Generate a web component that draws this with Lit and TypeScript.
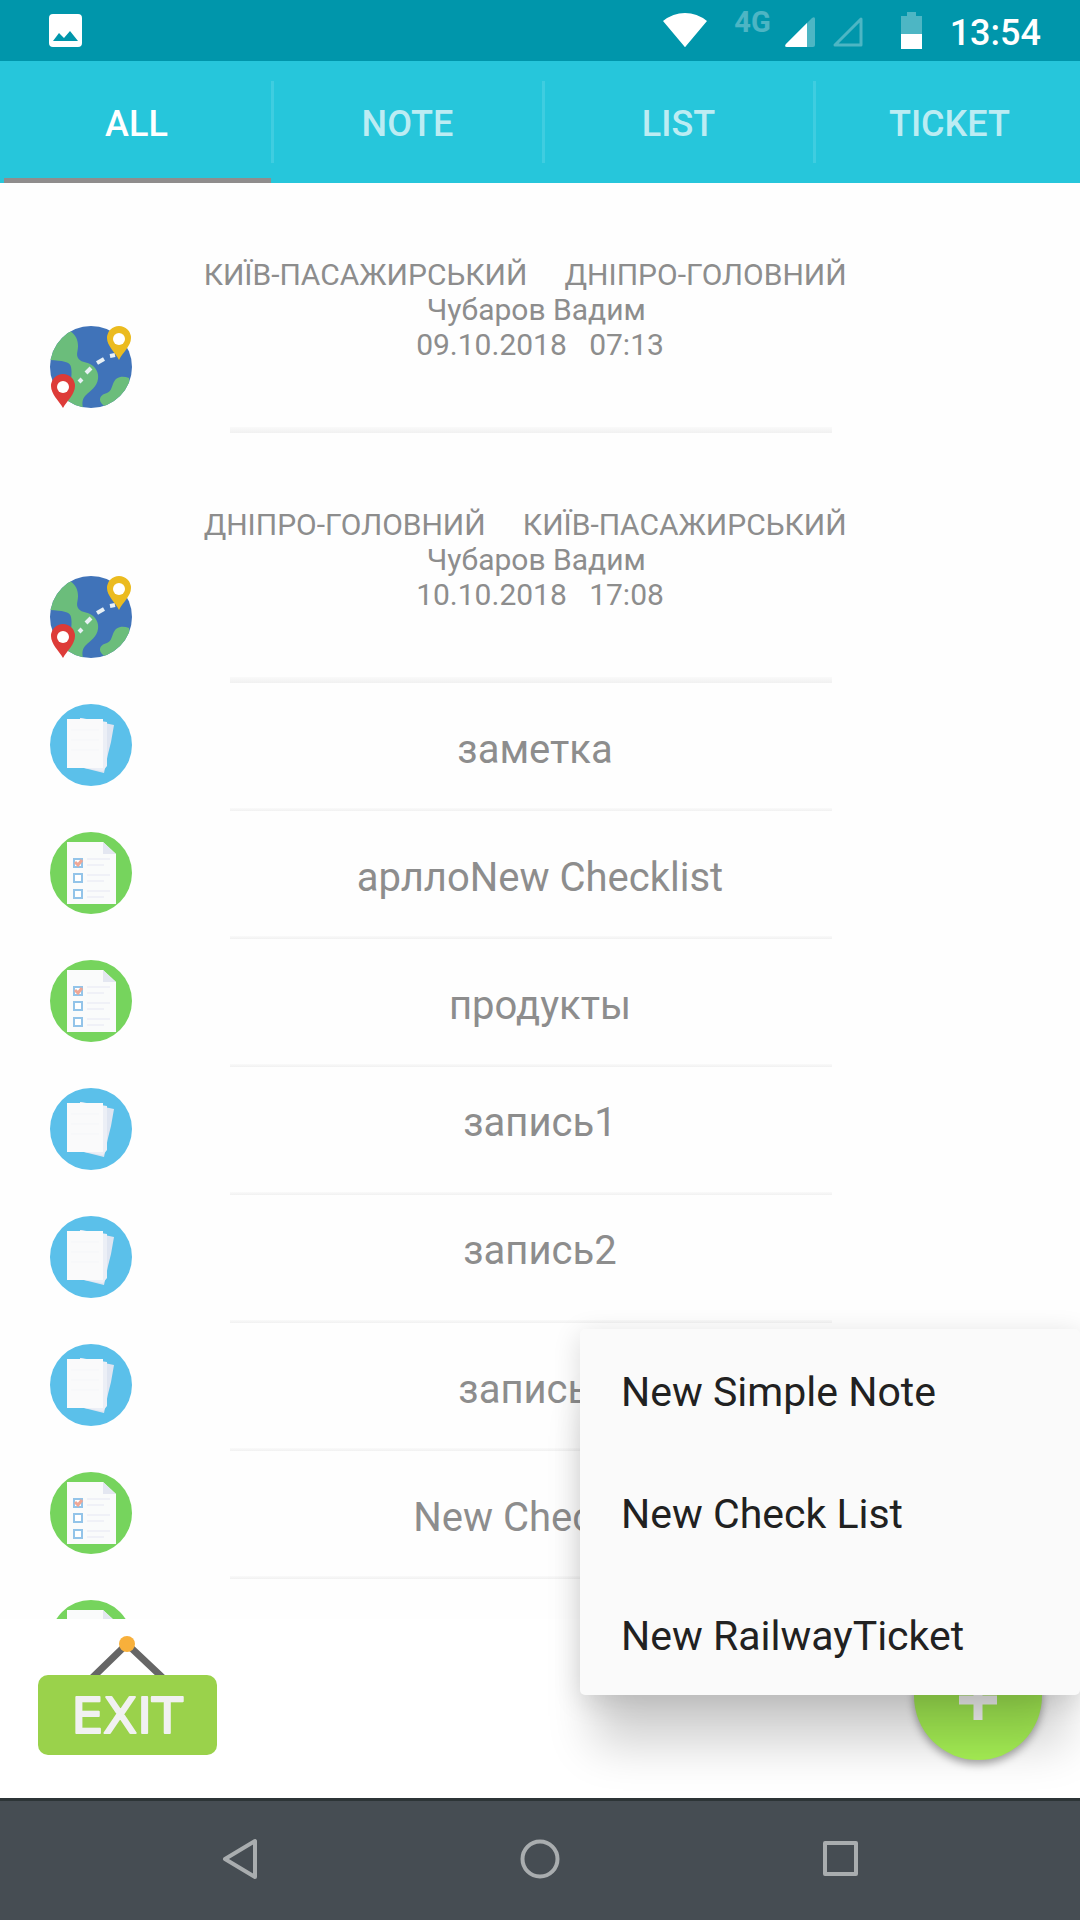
import { LitElement, html, svg, css, nothing } from "lit";
import { customElement, property, state } from "lit/decorators.js";
import { classMap } from "lit/directives/class-map.js";

type Kind = "ticket" | "note" | "checklist";

interface Entry {
  kind: Kind;
  lines: string[];
  raised?: boolean;
}

const TABS = ["ALL", "NOTE", "LIST", "TICKET"];

const ENTRIES: Entry[] = [
  {
    kind: "ticket",
    lines: ["КИЇВ-ПАСАЖИРСЬКИЙ     ДНІПРО-ГОЛОВНИЙ    ", "Чубаров Вадим ", "09.10.2018   07:13"],
  },
  {
    kind: "ticket",
    lines: ["ДНІПРО-ГОЛОВНИЙ     КИЇВ-ПАСАЖИРСЬКИЙ    ", "Чубаров Вадим ", "10.10.2018   17:08"],
  },
  { kind: "note", lines: ["заметка "] },
  { kind: "checklist", lines: ["арллоNew Checklist"] },
  { kind: "checklist", lines: ["продукты"] },
  { kind: "note", lines: ["запись1"], raised: true },
  { kind: "note", lines: ["запись2"], raised: true },
  { kind: "note", lines: ["запись3 "] },
  { kind: "checklist", lines: ["New Checklist"] },
  { kind: "checklist", lines: [] },
];

const MENU = ["New Simple Note", "New Check List", "New RailwayTicket"];

const globe = svg`
  <clipPath id="disc"><circle cx="41" cy="41" r="41"/></clipPath>
  <circle cx="41" cy="41" r="41" fill="#4073b9"/>
  <g clip-path="url(#disc)" fill="#6bbd7b">
    <path d="M0 34 L0 8 L20 5 C26 9 28 14 28 20 C28 25 26 28 28 32 C30 36 36 36 40 38 C46 41 49 47 48 53 C47 61 40 65 36 69 C32 73 32 77 33 82 L18 82 L18 62 C22 54 22 46 21 41 C20 35 12 35 0 34 Z"/>
    <path d="M79 52 C72 49 65 51 63 58 C61 63 61 65 57 67 C53 68 50 70 50 74 C50 76 52 78 54 80 L82 78 Z"/>
  </g>
  <g stroke="#e9f1f5" stroke-width="4">
    <path d="M29 56 L32 53"/>
    <path d="M36 47 L41 42"/>
    <path d="M47 37 L54 33"/>
    <path d="M60 30 L65 29"/>
  </g>
  <path d="M13 48 A12 12 0 0 1 25 60 C25 68 17 75 13 82 C9 75 1 68 1 60 A12 12 0 0 1 13 48 Z" fill="#dd3b38"/>
  <circle cx="13" cy="61" r="6" fill="#ffffff"/>
  <path d="M69 0 A12 12 0 0 1 81 12 C81 20 73 26 69 34 C65 26 57 20 57 12 A12 12 0 0 1 69 0 Z" fill="#ebbb1f"/>
  <circle cx="69" cy="13" r="6" fill="#ffffff"/>`;

const papers = svg`
  <circle cx="41" cy="41" r="41" fill="#5bc0ea"/>
  <path d="M30 14 L64 21 L61 38 L58 50 L54 69 L34 64 Z" fill="#dfe5f1"/>
  <path d="M30 14 L57 18 L57 62 L53 67 L34 64 Z" fill="#eceff6"/>
  <rect x="17" y="15" width="36" height="49" fill="#fafafb"/>
  <g stroke="#f5f6f9" stroke-width="1"><path d="M21 26 H49 M21 36 H49 M21 46 H49"/></g>`;

const checklist = svg`
  <circle cx="41" cy="41" r="41" fill="#76d45d"/>
  <path d="M17 10 H53 L66 22 V72 H17 Z" fill="#fafbfb"/>
  <path d="M53 10 L66 22 H53 Z" fill="#e4e7f1"/>
  <g fill="#ffffff" stroke="#93c4e9" stroke-width="2">
    <rect x="24" y="27" width="8" height="8"/>
    <rect x="24" y="42" width="8" height="8"/>
    <rect x="24" y="58" width="8" height="8"/>
  </g>
  <path d="M25 30 L28 33 L32 28" fill="none" stroke="#efa795" stroke-width="3"/>
  <g stroke="#f0f1f7" stroke-width="2">
    <path d="M37 27 H60 M37 33 H54 M37 43 H60 M37 49 H54 M37 59 H60 M37 65 H54"/>
  </g>`;

@customElement("entry-icon")
class EntryIcon extends LitElement {
  static styles = css`
    :host { display: block; width: 82px; height: 82px; }
    .icon { display: block; width: 100%; height: 100%; }
  `;

  @property() kind: Kind = "note";

  render() {
    const art = { ticket: globe, note: papers, checklist };
    return html`<svg class="icon" viewBox="0 0 82 82" aria-hidden="true">${art[this.kind]}</svg>`;
  }
}

@customElement("status-bar")
class StatusBar extends LitElement {
  static styles = css`
    :host {
      display: flex;
      align-items: flex-start;
      height: 61px;
      box-sizing: border-box;
      padding: 0 39px 0 49px;
      background: #0096ab;
      color: #ffffff;
      font-weight: 500;
    }
    svg { display: block; flex: none; }
    .push { margin-right: auto; }
    .wifi { margin-right: 27px; }
    .network { font-size: 29px; line-height: 44px; font-weight: 700; opacity: 0.3; margin-right: 14px; }
    .signal { margin-right: 18px; }
    .signal-empty { margin-right: 38px; }
    .battery { margin-right: 28px; }
    .clock { font-size: 36px; line-height: 67px; }
  `;

  render() {
    return html`
      <svg class="push" width="33" height="61" viewBox="0 0 33 61" aria-hidden="true">
        <path fill="#ffffff" fill-rule="evenodd" d="M4 14 H29 Q33 14 33 18 V43 Q33 47 29 47 H4 Q0 47 0 43 V18 Q0 14 4 14 Z M4 41 H29 L21 31 L15 38 L10 33 Z"/>
      </svg>
      <svg class="wifi" width="44" height="61" viewBox="0 0 44 61" aria-hidden="true">
        <path fill="#ffffff" d="M0 21 Q10 13 22 13 Q34 13 44 21 L23 46 Q22 48 21 46 Z"/>
      </svg>
      <span class="network">4G</span>
      <svg class="signal" width="30" height="61" viewBox="0 0 30 61" aria-hidden="true">
        <path fill="#4db6c4" d="M27 18 Q30 16 30 19 V45 Q30 47 28 47 H2 Q-1 47 1 44 Z"/>
        <path fill="#ffffff" d="M22 23 V47 H2 Q-1 47 1 44 Z"/>
      </svg>
      <svg class="signal-empty" width="30" height="61" viewBox="0 0 30 61" aria-hidden="true">
        <path fill="none" stroke="#4db6c4" stroke-width="3" stroke-linejoin="round" d="M28 19 V45 H2 Z"/>
      </svg>
      <svg class="battery" width="21" height="61" viewBox="0 0 21 61" aria-hidden="true">
        <path fill="#4db6c4" d="M6 12 H15 V16 H21 V34 H0 V16 H6 Z"/>
        <rect y="34" width="21" height="15" fill="#ffffff"/>
      </svg>
      <span class="clock">13:54</span>
    `;
  }
}

@customElement("app-root")
class AppRoot extends LitElement {
  static styles = css`
    :host {
      display: flex;
      flex-direction: column;
      height: 100vh;
      overflow: hidden;
      background: #ffffff;
      color: #8d8d8d;
      font-family: Roboto, "Liberation Sans", sans-serif;
    }
    button {
      appearance: none;
      border: 0;
      margin: 0;
      padding: 0;
      background: none;
      color: inherit;
      font: inherit;
      cursor: pointer;
    }
    svg { display: block; }

    .tabs-clip { flex: none; overflow: hidden; background: #26c6db; }
    .tabs {
      display: grid;
      grid-template-columns: repeat(4, 1fr);
      height: 122px;
      padding-left: 3px;
      margin-right: -7px;
    }
    .tab {
      position: relative;
      padding-top: 3px;
      padding-right: 4px;
      color: #bcecf3;
      font-size: 36px;
      font-weight: 500;
      background: linear-gradient(#3fcde0, #3fcde0) right 20px / 3px 82px no-repeat;
    }
    .tab:last-child { background: none; }
    .tab.active { color: #ffffff; }
    .tab.active::after {
      content: "";
      position: absolute;
      left: 1px;
      right: 3px;
      bottom: 0;
      height: 5px;
      background: #8f8d8d;
    }

    .entries {
      flex: 1 1 0;
      min-height: 0;
      overflow: hidden;
      margin: 0;
      padding: 0;
      list-style: none;
      background: #fefefe;
    }
    .entry {
      display: grid;
      grid-template-columns: 82px 1fr;
      width: 100%;
      min-height: 128px;
      padding: 0 132px 0 50px;
    }
    .entry.ticket { min-height: 250px; }
    .entry-icon { align-self: end; margin-bottom: 25px; }
    .entry-body {
      display: flex;
      flex-direction: column;
      align-self: stretch;
      align-items: stretch;
      box-sizing: border-box;
      padding-top: 42px;
      text-align: center;
      white-space: pre;
      font-size: 40px;
      line-height: 49px;
    }
    .raised .entry-body { padding-top: 31px; }
    .ticket .entry-body { padding-top: 74px; font-size: 30px; line-height: 35px; }
    .rule {
      height: 3px;
      margin: auto 116px 0 98px;
      background: linear-gradient(#fafafa, #f1f1f1);
    }
    .ticket .rule { height: 6px; }

    .actions {
      position: relative;
      flex: none;
      display: flex;
      justify-content: space-between;
      align-items: flex-start;
      height: 179px;
      box-sizing: border-box;
      padding: 13px 38px 0;
    }
    .exit-label {
      font-family: "DejaVu Sans", sans-serif;
      font-size: 50px;
      font-weight: 400;
    }
    .fab {
      display: grid;
      place-items: center;
      width: 128px;
      height: 128px;
      border-radius: 50%;
      background: #a8f355;
      box-shadow: 0 4px 8px rgba(0, 0, 0, 0.35);
    }

    .menu {
      position: absolute;
      right: 0;
      bottom: 103px;
      z-index: 2;
      display: flex;
      flex-direction: column;
      width: 500px;
      border-radius: 5px;
      background: #fafafa;
      color: #212121;
      box-shadow: 0 64px 44px -14px rgba(0, 0, 0, 0.18), 0 6px 28px rgba(0, 0, 0, 0.14);
    }
    .menu-item {
      height: 122px;
      padding: 3px 41px 0;
      text-align: left;
      font-size: 41px;
    }

    .navigation {
      position: relative;
      z-index: 3;
      flex: none;
      display: grid;
      grid-template-columns: repeat(3, 1fr);
      height: 122px;
      box-sizing: border-box;
      padding: 0 90px 3px;
      border-top: 3px solid #2c3436;
      background: #464d53;
    }
    .nav-button { display: grid; place-items: center; }
    .nav-icon { fill: none; stroke: #a9adaf; stroke-width: 4; stroke-linejoin: round; }
  `;

  @state() private active = 0;
  @state() private menuOpen = true;

  private renderEntry(entry: Entry) {
    const classes = { entry: true, ticket: entry.kind === "ticket", raised: !!entry.raised };
    return html`
      <li>
        <button class=${classMap(classes)}>
          <entry-icon class="entry-icon" .kind=${entry.kind}></entry-icon>
          <span class="entry-body">${entry.lines.map((line) => html`<span>${line}</span>`)}<span class="rule"></span></span>
        </button>
      </li>
    `;
  }

  render() {
    return html`
      <status-bar></status-bar>
      <div class="tabs-clip">
        <div class="tabs" role="tablist">
          ${TABS.map(
            (label, i) => html`
              <button
                class=${classMap({ tab: true, active: i === this.active })}
                role="tab"
                aria-selected=${i === this.active ? "true" : "false"}
                @click=${() => (this.active = i)}
              >${label}</button>
            `
          )}
        </div>
      </div>
      <ul class="entries">${ENTRIES.map((entry) => this.renderEntry(entry))}</ul>
      <div class="actions">
        <button class="exit">
          <svg width="179" height="124" viewBox="0 0 179 124">
            <path d="M54 46 L89 12 L125 46" fill="none" stroke="#666666" stroke-width="7"/>
            <circle cx="89" cy="12" r="8" fill="#f8b03b"/>
            <rect y="43" width="179" height="80" rx="10" fill="#9ad24b"/>
            <text class="exit-label" x="89" y="101" text-anchor="middle" fill="#f1f1f1" stroke="#f1f1f1" stroke-width="2" stroke-linejoin="round">EXIT</text>
          </svg>
        </button>
        <button class="fab" aria-label="Add" aria-expanded=${this.menuOpen ? "true" : "false"} @click=${() => (this.menuOpen = !this.menuOpen)}>
          <svg width="40" height="48" viewBox="0 0 40 48" aria-hidden="true">
            <path d="M20 8 V48 M1 28 H39" fill="none" stroke="#ffffff" stroke-width="9"/>
          </svg>
        </button>
        ${this.menuOpen
          ? html`<div class="menu" role="menu">
              ${MENU.map((label) => html`<button class="menu-item" role="menuitem">${label}</button>`)}
            </div>`
          : nothing}
      </div>
      <nav class="navigation">
        <button class="nav-button" aria-label="Back">
          <svg class="nav-icon" width="40" height="44" viewBox="0 0 40 44"><path d="M35 4 V40 L5 22 Z"/></svg>
        </button>
        <button class="nav-button" aria-label="Home">
          <svg class="nav-icon" width="44" height="44" viewBox="0 0 44 44"><circle cx="22" cy="22" r="17.5"/></svg>
        </button>
        <button class="nav-button" aria-label="Recent apps">
          <svg class="nav-icon" width="44" height="44" viewBox="0 0 44 44"><rect x="7" y="6" width="31" height="31"/></svg>
        </button>
      </nav>
    `;
  }
}
